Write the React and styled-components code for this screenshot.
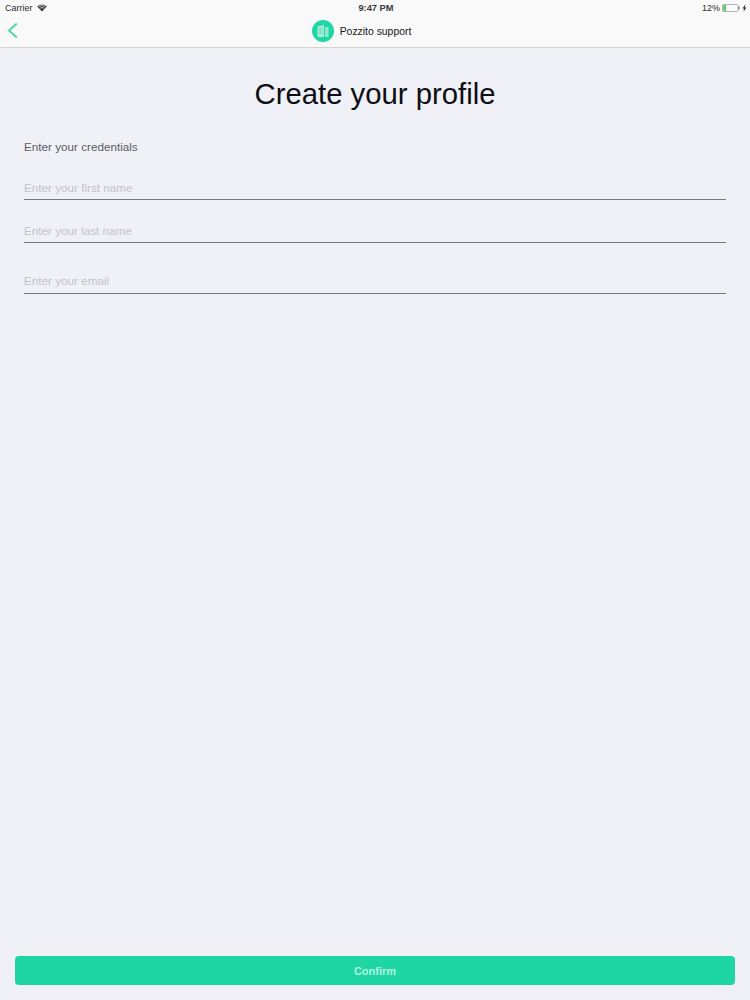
import styled, { createGlobalStyle } from "styled-components";

const GlobalStyle = createGlobalStyle`
  html, body {
    margin: 0;
    padding: 0;
    background: #f0f0f7;
  }

  * {
    box-sizing: border-box;
  }

  input::placeholder {
    color: #c2c2c9;
    opacity: 1;
  }
`;

const Page = styled.div`
  display: flex;
  flex-direction: column;
  width: 750px;
  height: 1000px;
  background: #f0f0f7;
  font-family: "Liberation Sans", Arial, sans-serif;
  overflow: hidden;
`;

const TopBar = styled.header`
  flex: none;
  height: 48px;
  background: #f9f9f9;
  border-bottom: 1px solid #d4d4d6;
`;

const StatusBar = styled.div`
  display: grid;
  grid-template-columns: 1fr auto 1fr;
  align-items: center;
  height: 15px;
  padding: 0 3px 0 5px;
  font-size: 9px;
  color: #2a2a2e;
`;

const StatusLeft = styled.div`
  display: flex;
  align-items: center;
  gap: 4px;
`;

const Clock = styled.div`
  font-size: 9.3px;
  font-weight: 700;
  color: #3a3a40;
`;

const StatusRight = styled.div`
  display: flex;
  align-items: center;
  justify-content: flex-end;
  gap: 2px;
`;

const NavBar = styled.nav`
  position: relative;
  display: flex;
  align-items: center;
  justify-content: center;
  gap: 6px;
  height: 32px;
  padding-right: 27px;
`;

const BackButton = styled.button`
  position: absolute;
  left: 7px;
  top: 7px;
  display: flex;
  padding: 0;
  border: 0;
  background: none;
`;

const Avatar = styled.div`
  display: flex;
  align-items: center;
  justify-content: center;
  width: 22px;
  height: 22px;
  border-radius: 50%;
  background: #1fd6a4;
`;

const NavTitle = styled.span`
  font-size: 10.4px;
  color: #17171b;
`;

const Main = styled.main`
  flex: 1;
  padding: 0 24px;
`;

const Title = styled.h1`
  margin: 27px 0 0;
  font-size: 29.3px;
  font-weight: 400;
  line-height: 38px;
  text-align: center;
  color: #0e0e14;
`;

const SectionLabel = styled.p`
  margin: 26px 0 0;
  font-size: 11.7px;
  line-height: 16px;
  color: #5c5c63;
`;

const Fields = styled.form`
  display: flex;
  flex-direction: column;
  margin-top: 18px;
`;

const Field = styled.input`
  width: 100%;
  height: 27px;
  margin-top: ${(props) => props.$top}px;
  padding: ${(props) => props.$pad}px 0 0;
  border: 0;
  border-bottom: 1px solid #77777c;
  border-radius: 0;
  outline: none;
  background: transparent;
  font-family: inherit;
  font-size: 11.7px;
`;

const Footer = styled.footer`
  flex: none;
  padding: 0 15px 15px;
`;

const ConfirmButton = styled.button`
  display: block;
  width: 100%;
  height: 29px;
  padding: 0;
  border: 0;
  border-radius: 4px;
  background: #1ed6a4;
  color: #b5f2e0;
  font-family: inherit;
  font-size: 11px;
  font-weight: 700;
`;

function WifiIcon() {
  return (
    <svg width="10" height="8" viewBox="0 0 10 8">
      <path d="M5 7.6 0.2 2.6C2.9 0.1 7.1 0.1 9.8 2.6Z" fill="#333338" />
      <path d="M1.7 2.9C3.7 1.4 6.3 1.4 8.3 2.9" fill="none" stroke="#f9f9f9" strokeWidth="0.7" />
      <path d="M3 4.3C4.2 3.4 5.8 3.4 7 4.3" fill="none" stroke="#f9f9f9" strokeWidth="0.7" />
    </svg>
  );
}

function BatteryIcon() {
  return (
    <svg width="25" height="8" viewBox="0 0 25 8">
      <rect x="0.5" y="0.5" width="15.5" height="7" rx="1.2" fill="#fbfbfb" stroke="#8a948c" strokeWidth="0.7" />
      <rect x="1.2" y="1.2" width="3" height="5.6" fill="#5cc46a" />
      <rect x="16.3" y="2.5" width="1.2" height="3" fill="#77777c" />
      <path d="M23.4 0.3 20.6 4.5H22L21.5 7.8 24.4 3.4H22.8Z" fill="#333338" />
    </svg>
  );
}

function BackIcon() {
  return (
    <svg width="11" height="17" viewBox="0 0 11 17">
      <path d="M9.8 1.5 2 8.5 9.8 15.5" fill="none" stroke="#4bd6ae" strokeWidth="2" />
    </svg>
  );
}

function BuildingIcon() {
  return (
    <svg width="14" height="14" viewBox="0 0 14 14">
      <path d="M1.5 2.2 8 1V13H1.5Z" fill="#a5ecd6" />
      <path d="M9 3H12.5V13H9Z" fill="#8fe8cd" />
      <path d="M3 4.5H6.5M3 6.7H6.5M3 8.9H6.5" stroke="#45dcb3" strokeWidth="0.8" />
    </svg>
  );
}

export default function App() {
  return (
    <>
      <GlobalStyle />
      <Page>
        <TopBar>
          <StatusBar>
            <StatusLeft>
              Carrier
              <WifiIcon />
            </StatusLeft>
            <Clock>9:47 PM</Clock>
            <StatusRight>
              12%
              <BatteryIcon />
            </StatusRight>
          </StatusBar>
          <NavBar>
            <BackButton type="button" aria-label="Back">
              <BackIcon />
            </BackButton>
            <Avatar>
              <BuildingIcon />
            </Avatar>
            <NavTitle>Pozzito support</NavTitle>
          </NavBar>
        </TopBar>
        <Main>
          <Title>Create your profile</Title>
          <SectionLabel>Enter your credentials</SectionLabel>
          <Fields>
            <Field $top={0} $pad={2} placeholder="Enter your first name" />
            <Field $top={16} $pad={3} placeholder="Enter your last name" />
            <Field $top={24} $pad={0} placeholder="Enter your email" />
          </Fields>
        </Main>
        <Footer>
          <ConfirmButton type="button">Confirm</ConfirmButton>
        </Footer>
      </Page>
    </>
  );
}
